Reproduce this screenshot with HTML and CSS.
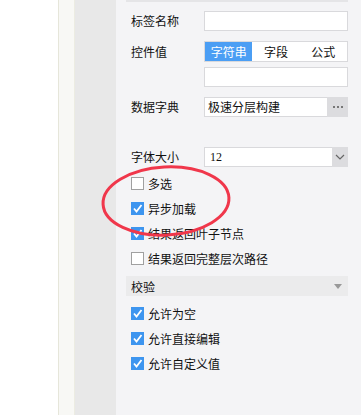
FILE: index.html
```html
<!DOCTYPE html>
<html>
<head>
<meta charset="utf-8">
<link rel="stylesheet" href="styles.css">
</head>
<body>
<div class="app">
  <div class="col-white"></div>
  <div class="col-light"></div>
  <div class="col-grey"></div>
  <div class="panel">
    <div class="topline"></div>
    <div class="row r1">
      <span class="label">标签名称</span>
      <div class="input"></div>
    </div>
    <div class="row r2">
      <span class="label">控件值</span>
      <div class="seg">
        <span class="seg-item active">字符串</span>
        <span class="seg-item">字段</span>
        <span class="seg-item">公式</span>
      </div>
    </div>
    <div class="row r3">
      <span class="label"></span>
      <div class="input"></div>
    </div>
    <div class="row r4">
      <span class="label">数据字典</span>
      <div class="combo">
        <span class="combo-text">极速分层构建</span>
        <span class="combo-btn dots"><i></i><i></i><i></i></span>
      </div>
    </div>
    <div class="row r5">
      <span class="label">字体大小</span>
      <div class="combo">
        <span class="combo-text num">12</span>
        <span class="combo-btn arrow">
          <svg width="10" height="6" viewBox="0 0 10 6"><path d="M1 1 L5 5 L9 1" fill="none" stroke="#666" stroke-width="1.2"/></svg>
        </span>
      </div>
    </div>
    <div class="checks c1">
      <div class="check"><span class="box"></span><span>多选</span></div>
      <div class="check"><span class="box on"><svg width="13" height="13" viewBox="0 0 13 13"><path d="M3 6.5 L5.5 9.5 L10.5 3" fill="none" stroke="#fff" stroke-width="1.8"/></svg></span><span>异步加载</span></div>
      <div class="check"><span class="box on"><svg width="13" height="13" viewBox="0 0 13 13"><path d="M3 6.5 L5.5 9.5 L10.5 3" fill="none" stroke="#fff" stroke-width="1.8"/></svg></span><span>结果返回叶子节点</span></div>
      <div class="check"><span class="box"></span><span>结果返回完整层次路径</span></div>
    </div>
    <div class="section">
      <span>校验</span>
      <svg width="8" height="5" viewBox="0 0 8 5"><path d="M0 0 H8 L4 5 Z" fill="#999"/></svg>
    </div>
    <div class="checks c2">
      <div class="check"><span class="box on"><svg width="13" height="13" viewBox="0 0 13 13"><path d="M3 6.5 L5.5 9.5 L10.5 3" fill="none" stroke="#fff" stroke-width="1.8"/></svg></span><span>允许为空</span></div>
      <div class="check"><span class="box on"><svg width="13" height="13" viewBox="0 0 13 13"><path d="M3 6.5 L5.5 9.5 L10.5 3" fill="none" stroke="#fff" stroke-width="1.8"/></svg></span><span>允许直接编辑</span></div>
      <div class="check"><span class="box on"><svg width="13" height="13" viewBox="0 0 13 13"><path d="M3 6.5 L5.5 9.5 L10.5 3" fill="none" stroke="#fff" stroke-width="1.8"/></svg></span><span>允许自定义值</span></div>
    </div>
  </div>
  <svg class="circle" width="140" height="80" viewBox="0 0 140 80">
    <ellipse cx="70" cy="40" rx="63" ry="34" fill="none" stroke="#f0374b" stroke-width="3" transform="rotate(-3 70 40)"/>
  </svg>
</div>
</body>
</html>
```

FILE: styles.css
```css
html, body {
  margin: 0;
  padding: 0;
}
body {
  font-family: "Noto Sans CJK SC", "Liberation Sans", sans-serif;
  font-size: 12px;
  color: #111;
  background: #fff;
}
.app {
  position: relative;
  display: flex;
  width: 361px;
  height: 415px;
  overflow: hidden;
}
.col-white {
  width: 58px;
  background: #fff;
  border-right: 1px solid #e6e6da;
}
.col-light {
  width: 15px;
  background: #f8f8f5;
  border-right: 1px solid #ecece2;
}
.col-grey {
  width: 41px;
  background: #e8e8e8;
}
.panel {
  flex: 1;
  background: #f4f4f6;
  padding: 0 13px 0 10px;
  display: flex;
  flex-direction: column;
}
.topline {
  height: 2px;
  background: #e5e5e7;
}
.row {
  display: flex;
  align-items: center;
  height: 20px;
}
.label {
  width: 73px;
  padding-left: 5px;
  line-height: 20px;
}
.r1 { margin-top: 9px; }
.r2 { margin-top: 10px; height: 21px; }
.r3 { margin-top: 5px; }
.r4 { margin-top: 10px; }
.r5 { margin-top: 30px; }
.input {
  flex: 1;
  height: 18px;
  background: #fff;
  border: 1px solid #d9d9dc;
}
.seg {
  flex: 1;
  display: flex;
  height: 19px;
  background: #fff;
  border: 1px solid #d9d9dc;
}
.seg-item {
  flex: 1;
  text-align: center;
  line-height: 19px;
}
.seg-item.active {
  background: #4b9ef4;
  color: #fff;
}
.combo {
  flex: 1;
  display: flex;
  height: 20px;
}
.combo-text {
  flex: 1;
  background: #fff;
  border: 1px solid #d9d9dc;
  border-right: none;
  line-height: 18px;
  padding-left: 3px;
}
.combo-text.num {
  font-family: "Liberation Serif", serif;
  font-size: 12px;
  padding-left: 5px;
}
.combo-btn {
  background: #dcdcdf;
  display: flex;
  align-items: center;
  justify-content: center;
}
.dots {
  width: 21px;
  gap: 2px;
}
.dots i {
  width: 2px;
  height: 2px;
  background: #777;
}
.arrow {
  width: 16px;
}
.checks {
  display: flex;
  flex-direction: column;
  gap: 12px;
  padding-left: 5px;
}
.c1 { margin-top: 10px; }
.c2 { margin-top: 11px; }
.check {
  display: flex;
  align-items: center;
  height: 13px;
  gap: 4px;
  line-height: 13px;
}
.box {
  width: 11px;
  height: 11px;
  border: 1px solid #a0a0a0;
  background: #fff;
  display: block;
  flex: none;
}
.box.on {
  width: 13px;
  height: 13px;
  border: none;
  background: #3d95ef;
}
.box svg { display: block; }
.section {
  margin-top: 11px;
  height: 20px;
  background: #ebebec;
  display: flex;
  align-items: center;
  justify-content: space-between;
  padding: 0 6px 0 5px;
}
.circle {
  position: absolute;
  left: 96px;
  top: 161px;
}
```
